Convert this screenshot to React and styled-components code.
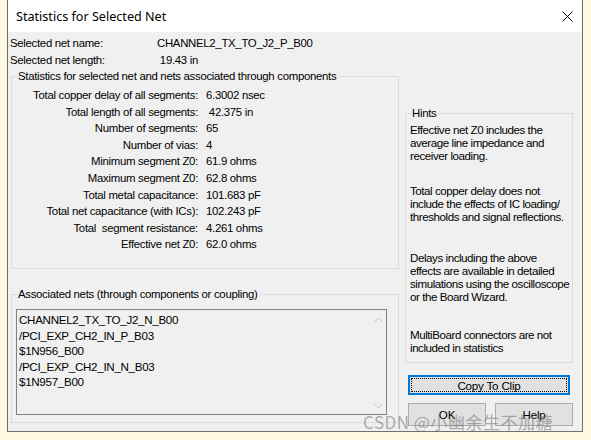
import React from 'react'
import styled, { createGlobalStyle } from 'styled-components'

const GlobalStyle = createGlobalStyle`
  html, body {
    margin: 0;
    padding: 0;
    background: #fff9e1;
  }
  body {
    font-family: "Liberation Sans", Arial, sans-serif;
    font-size: 11.4px;
    letter-spacing: -0.3px;
    color: #000;
  }
`

const Page = styled.div`
  position: relative;
  width: 591px;
  height: 440px;
  overflow: hidden;
`

const Window = styled.div`
  margin-left: 7px;
  width: 576px;
  height: 432px;
  border: 1px solid #707070;
  border-top: none;
  box-sizing: border-box;
  background: #f0f0f0;
  display: flex;
  flex-direction: column;
`

const TitleBar = styled.div`
  height: 32px;
  background: #fff;
  display: flex;
  align-items: center;
  justify-content: space-between;
  padding: 0 9px 0 8px;
  flex-shrink: 0;
`

const Title = styled.span`
  font-family: "Noto Sans", "Open Sans", sans-serif;
  font-size: 12.6px;
  letter-spacing: 0;
`

const Body = styled.div`
  padding: 3px 0 0 2px;
  flex: 1;
`

const InfoRow = styled.div`
  display: grid;
  grid-template-columns: 147px 1fr;
  height: 17px;
  line-height: 17px;
`

const Columns = styled.div`
  display: flex;
  gap: 6px;
  padding-left: 1px;
`

const Left = styled.div`
  width: 388px;
  display: flex;
  flex-direction: column;
  gap: 18px;
`

const Right = styled.div`
  width: 168px;
  padding-top: 37px;
  display: flex;
  flex-direction: column;
`

const Group = styled.fieldset`
  margin: 0;
  min-width: 0;
  height: ${p => p.$h}px;
  box-sizing: border-box;
  border: 1px solid #dcdcdc;
  padding: 0;
  legend {
    padding: 0 2px 0 1px;
    margin-left: 5px;
    line-height: 14px;
  }
`

const StatGrid = styled.div`
  display: grid;
  grid-template-columns: 186px 1fr;
  column-gap: 8px;
  padding-top: 4px;
`

const StatLabel = styled.div`
  text-align: right;
  height: 16.6px;
  line-height: 16.6px;
  white-space: pre;
`

const StatValue = styled.div`
  height: 16.6px;
  line-height: 16.6px;
  white-space: pre;
`

const ListBox = styled.div`
  position: relative;
  height: 106px;
  margin: 8px 11px 0 4px;
  border: 1px solid #828282;
  background: #f0f0f0;
  padding: 2px 0 0 2px;
  box-sizing: border-box;
  font-size: 11.6px;
  line-height: 15.5px;
`

const ScrollArrow = styled.div`
  position: absolute;
  right: 3px;
  ${p => (p.$down ? 'bottom: 4px;' : 'top: 6px;')}
  width: 10px;
  height: 8px;
  display: flex;
  align-items: center;
  justify-content: center;
`

const HintText = styled.div`
  font-size: 11.6px;
  letter-spacing: -0.45px;
  line-height: 13px;
  padding: 3px 0 0 4px;
  white-space: nowrap;
  margin-bottom: ${p => p.$mb || 0}px;
`

const Button = styled.button`
  font-family: "Liberation Sans", Arial, sans-serif;
  font-size: 11.6px;
  letter-spacing: -0.2px;
  height: ${p => p.$h || 20}px;
  background: #e1e1e1;
  border: 1px solid ${p => (p.$focus ? '#0078d7' : '#adadad')};
  box-shadow: ${p => (p.$focus ? 'inset 0 0 0 1px #0078d7' : 'none')};
  padding: 0;
  color: #000;
  position: relative;
`

const WideButton = styled(Button)`
  margin: 12px 0 0 3px;
  width: 162px;
`

const FocusRing = styled.span`
  position: absolute;
  inset: 2px;
  border: 1px dotted #000;
  display: flex;
  align-items: center;
  justify-content: center;
`

const ButtonRow = styled.div`
  display: flex;
  gap: 9px;
  margin-top: 8px;
  padding-left: 3px;
  button {
    width: 78px;
  }
`

const Watermark = styled.div`
  position: absolute;
  left: 363px;
  top: 409px;
  font-family: "Noto Sans CJK SC", "Noto Sans", sans-serif;
  font-size: 17px;
  color: rgba(110, 110, 110, 0.55);
  letter-spacing: 0.5px;
  white-space: nowrap;
  pointer-events: none;
`

const stats = [
  ['Total copper delay of all segments:', '6.3002 nsec'],
  ['Total length of all segments:', ' 42.375 in'],
  ['Number of segments:', '65'],
  ['Number of vias:', '4'],
  ['Minimum segment Z0:', '61.9 ohms'],
  ['Maximum segment Z0:', '62.8 ohms'],
  ['Total metal capacitance:', '101.683 pF'],
  ['Total net capacitance (with ICs):', '102.243 pF'],
  ['Total  segment resistance:', '4.261 ohms'],
  ['Effective net Z0:', '62.0 ohms'],
]

const nets = [
  'CHANNEL2_TX_TO_J2_N_B00',
  '/PCI_EXP_CH2_IN_P_B03',
  '$1N956_B00',
  '/PCI_EXP_CH2_IN_N_B03',
  '$1N957_B00',
]

const hints = [
  [['Effective net Z0 includes the', 'average line impedance and', 'receiver loading.'], 19],
  [['Total copper delay does not', 'include the effects of IC loading/', 'thresholds and signal reflections.'], 25],
  [['Delays including the above', 'effects are available in detailed', 'simulations using the oscilloscope', 'or the Board Wizard.'], 22],
  [['MultiBoard connectors are not', 'included in statistics'], 0],
]

const App = () => (
  <Page>
    <GlobalStyle />
    <Window>
      <TitleBar>
        <Title>Statistics for Selected Net</Title>
        <svg width="11" height="11" viewBox="0 0 11 11">
          <path d="M0.5 0.5 L10.5 10.5 M10.5 0.5 L0.5 10.5" stroke="#000" strokeWidth="1" />
        </svg>
      </TitleBar>
      <Body>
        <InfoRow>
          <span>Selected net name:</span>
          <span>CHANNEL2_TX_TO_J2_P_B00</span>
        </InfoRow>
        <InfoRow>
          <span>Selected net length:</span>
          <span>&nbsp;19.43 in</span>
        </InfoRow>
        <Columns>
          <Left>
            <Group $h={200}>
              <legend>Statistics for selected net and nets associated through components</legend>
              <StatGrid>
                {stats.map(([label, value]) => (
                  <React.Fragment key={label}>
                    <StatLabel>{label}</StatLabel>
                    <StatValue>{value}</StatValue>
                  </React.Fragment>
                ))}
              </StatGrid>
            </Group>
            <Group $h={136}>
              <legend>Associated nets (through components or coupling)</legend>
              <ListBox>
                {nets.map(n => <div key={n}>{n}</div>)}
                <ScrollArrow>
                  <svg width="9" height="6" viewBox="0 0 9 6">
                    <path d="M0.5 5 L4.5 1 L8.5 5" stroke="#c0c0c0" fill="none" />
                  </svg>
                </ScrollArrow>
                <ScrollArrow $down>
                  <svg width="9" height="6" viewBox="0 0 9 6">
                    <path d="M0.5 1 L4.5 5 L8.5 1" stroke="#c0c0c0" fill="none" />
                  </svg>
                </ScrollArrow>
              </ListBox>
            </Group>
          </Left>
          <Right>
            <Group $h={257}>
              <legend>Hints</legend>
              {hints.map(([lines, mb]) => (
                <HintText key={lines[0]} $mb={mb}>
                  {lines.map(l => <div key={l}>{l}</div>)}
                </HintText>
              ))}
            </Group>
            <WideButton $focus>
              <FocusRing>Copy To Clip</FocusRing>
            </WideButton>
            <ButtonRow>
              <Button $h={23}>OK</Button>
              <Button $h={23}>Help</Button>
            </ButtonRow>
          </Right>
        </Columns>
      </Body>
    </Window>
    <Watermark>CSDN @小幽余生不加糖</Watermark>
  </Page>
)

export default App
